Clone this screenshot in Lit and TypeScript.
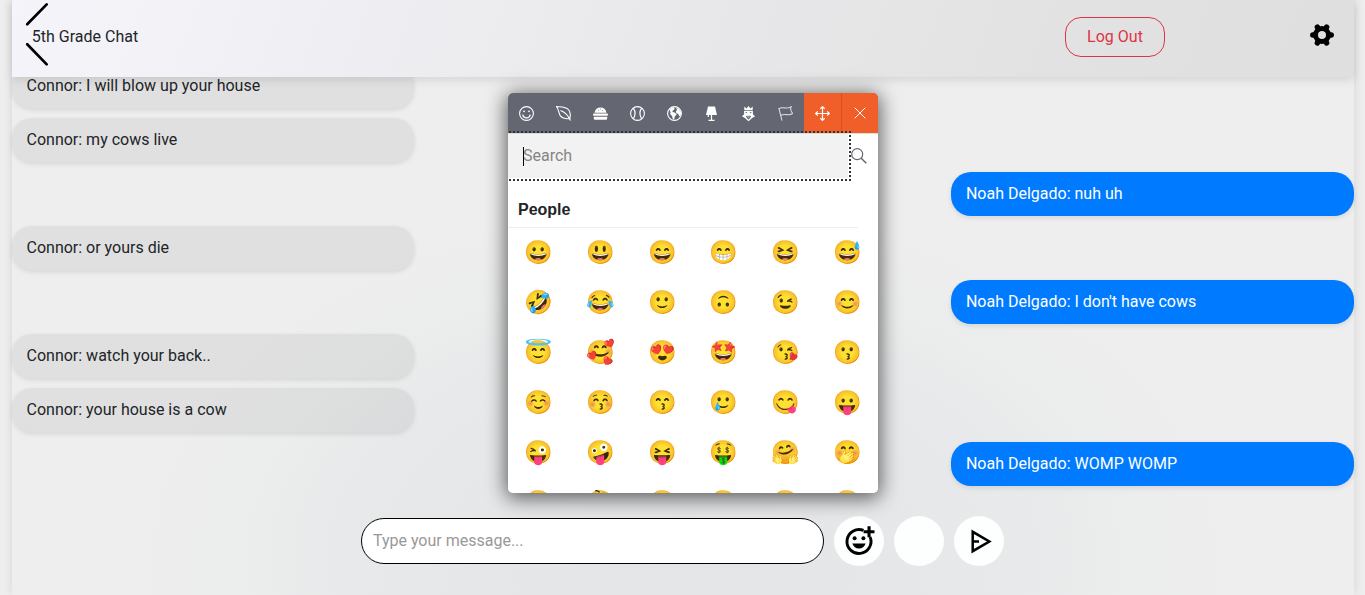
import { LitElement, html, css, svg } from "lit";
import { customElement } from "lit/decorators.js";

interface Message { own: boolean; text: string; }

const MESSAGES: Message[] = [
  { own: false, text: "Connor: I will blow up your house" },
  { own: false, text: "Connor: my cows live" },
  { own: true, text: "Noah Delgado: nuh uh" },
  { own: false, text: "Connor: or yours die" },
  { own: true, text: "Noah Delgado: I don't have cows" },
  { own: false, text: "Connor: watch your back.." },
  { own: false, text: "Connor: your house is a cow" },
  { own: true, text: "Noah Delgado: WOMP WOMP" },
];

const EMOJI = [
  "😀", "😃", "😄", "😁", "😆", "😅",
  "🤣", "😂", "🙂", "🙃", "😉", "😊",
  "😇", "🥰", "😍", "🤩", "😘", "😗",
  "☺️", "😚", "😙", "🥲", "😋", "😛",
  "😜", "🤪", "😝", "🤑", "🤗", "🤭",
  "🤫", "🤔", "🤐", "🤨", "😐", "😑",
];

const TABS = [
  svg`<circle cx="7.5" cy="7.5" r="6.9"/><path d="M3.7 8.6c.5 2.2 2 3.300 3.800 3.300s3.300-1.100 3.800-3.300" stroke-width="1.300"/><circle cx="5" cy="5.300" r=".9" fill="#fff" stroke="none"/><circle cx="10" cy="5.300" r=".9" fill="#fff" stroke="none"/>`,
  svg`<path d="M.5.6C5 .9 10 .3 12.800 4c2 2.800 1.700 6 1 8.600-3.500.4-7 .2-9.200-2.400C2.400 7.400 3.200 3.500.5.600zM4.500 4.500c3.500 1.300 7.500 4.500 10 10"/>`,
  svg`<g fill="#fff" stroke="none"><path d="M1.500 6.800C2 3.300 4.500 1.500 7.500 1.500s5.500 1.800 6 5.300z"/><rect x="0" y="7.600" width="15" height="2.200" rx="1"/><path d="M.8 10.700h13.400v1.500c0 1-.7 1.600-1.700 1.600h-10c-1 0-1.700-.6-1.700-1.600z"/></g><path d="M5 4.300h.8M7.300 3h.8M9.300 4.600h.8" stroke="#646772" stroke-width=".8"/>`,
  svg`<circle cx="7.500" cy="7.500" r="6.900"/><path d="M3.300 2.200c2.200 3.200 2.200 7.400 0 10.600M11.700 2.200c-2.200 3.200-2.200 7.400 0 10.600" stroke-width="1.200"/>`,
  svg`<circle cx="7.500" cy="7.500" r="6.900"/><path d="M2.400 3.500 5.500 1.200l2.200.6-.6 2-1.700.9.300 1.300 2.600.7 1.300 1.800-1.900 2.200-.5 2.500-1.300.2-.8-3.300-1.900-1.800.3-2.100zM9.200 2l2.500.7 2.300 3.200-.2 3.600-1.600.8-.9-2.400-2-.7-.4-2.200 1.200-.8z" fill="#fff" stroke="none"/>`,
  svg`<path d="M4 .4h7l2 8.600H2z" fill="#fff" stroke="none"/><path d="M7.500 9v5M4.500 14.300h6M4.300 9v2" stroke-width="1.200"/>`,
  svg`<path d="M3.300.6 5.500 2.500 7.500.1l2 2.400L11.700.6v3.700H3.300z" fill="#fff" stroke="none"/><path d="M3.100 5.100h8.800v3.200l2.200 2.300-2.400.8H3.300l-2.400-.8 2.200-2.300z" fill="#fff" stroke="none"/><path d="M3.500 10.800 7.500 14.400 11.500 10.800" stroke-width="1.300"/><path d="M4.600 6.600h1.500M8.900 6.600h1.500M5.300 10.300h4.400L7.500 12.300z" stroke="#646772" stroke-width=".9"/>`,
  svg`<path d="M.8 1.800 4 14.600M1 3C4-.4 8.200 4.200 13.200.6c-1 2.400-.3 5 1.400 6.900-4.400 3.400-7.800-1.200-12 2.200" stroke-opacity=".75"/>`,
];

const TEETH = [0, 60, 120, 180, 240, 300];

@customElement("app-root")
export class AppRoot extends LitElement {
  static styles = css`
    * { box-sizing: border-box; }
    :host {
      display: block; height: 595px; overflow: hidden; padding: 0 11.5px;
      font: 16px/24px Roboto, sans-serif; color: #212529; background: #eee;
    }
    .chat {
      position: relative; height: 595px; display: flex; flex-direction: column;
      box-shadow: 0 0 10px rgba(0,0,0,.1);
      background: radial-gradient(ellipse 540px 350px at 50% 560px, #e3e5e7 0%, #e5e7e9 35%, #e7e9ea 62%, #ebecec 80%, #eee 100%);
    }
    .top {
      flex: none; height: 77px; display: flex; align-items: center; z-index: 1;
      background: linear-gradient(110deg, #f5f4fa 0%, #efeff3 25%, #e7e7e9 55%, #e2e2e2 78%, #dfdfdf 100%);
      box-shadow: 0 2px 10px rgba(0,0,0,.13);
    }
    .title { width: 1053.5px; height: 77px; padding: 25px 0 0 20.3px; position: relative; }
    .back { position: absolute; left: 11.5px; top: 0; }
    .logout {
      width: 100px; height: 40px; margin-top: -3px; border: 1px solid #dc3545; border-radius: 16px;
      background: transparent; color: #dc3545; font: inherit; padding: 0;
    }
    .gear { margin: -7px 0 0 145px; }
    .messages { flex: none; height: 423px; margin-top: -13px; display: flex; flex-direction: column; gap: 10px; }
    .msg {
      width: 30%; height: 44px; flex: none; padding: 10px 15px; border-radius: 20px;
      background: rgba(0,0,0,.06); box-shadow: 0 2px 5px rgba(0,0,0,.1);
    }
    .own { align-self: flex-end; background: #007bff; color: #fff; }
    .compose { display: flex; align-items: center; justify-content: center; gap: 10px; height: 50px; margin: 29px 0 0 0; padding-left: .4px; }
    .field { width: 463.6px; height: 46px; border: 1px solid #000; border-radius: 23px; background: #fff; color: #999; padding: 10px 11px; }
    .round { width: 50px; height: 50px; border-radius: 50%; background: #fdfefe; display: grid; place-items: center; }
    .picker {
      position: absolute; z-index: 2; left: 496.5px; top: 93px; width: 370px; height: 400px; overflow: hidden;
      border-radius: 5px; background: #fff;
    }
    .shade { position: absolute; z-index: 1; left: 496.5px; top: 93px; width: 370px; height: 400px; border-radius: 5px; box-shadow: 0 3px 20px 2px rgba(0,0,0,.62); }
    .tabs { display: grid; grid-template-columns: repeat(10, 37px); height: 40px; background: #646772; }
    .tab { display: grid; place-items: center; }
    .tab svg { display: block; }
    .hot { background: #f05f2a; }
    .last { border-left: 1px solid #d9501f; padding-right: 1px; }
    .searchrow { height: 45px; display: flex; align-items: center; border-top: 1px solid #ddd; }
    .search {
      width: 340px; height: 44px; background: #f2f2f2; outline: 2px dotted #333; outline-offset: 1px;
      color: #858585; padding: 10px 15px; position: relative;
    }
    .caret { position: absolute; left: 15px; top: 13px; width: 1px; height: 19px; background: #000; }
    .lens { margin-left: 2.6px; }
    .heading { font: bold 16px/24px "Liberation Sans", Arial, sans-serif; width: 350px; height: 50px; padding: 20px 10px 0; border-bottom: 1px solid #eee; }
    .grid { display: grid; grid-template-columns: repeat(6, 61.8px); grid-auto-rows: 50px; padding-left: .8px; }
    .emoji { width: 60px; text-align: center; font: 23px/50px "Noto Color Emoji", "Noto Sans", sans-serif; height: 50px; }
  `;

  render() {
    return html`
      <div class="chat">
        <header class="top">
          <div class="title">
            <svg class="back" width="28" height="70" fill="none" stroke="#000" stroke-width="2.700" stroke-linecap="round"><path d="M4.200 24.300 23.700 4.400M4.200 44.300 23.700 64.400"/></svg>
            5th Grade Chat
          </div>
          <button class="logout">Log Out</button>
          <svg class="gear" width="24" height="24" viewBox="0 0 24 24" fill="none" stroke="#000">
            <circle cx="12" cy="12" r="6.500" stroke-width="5"/>
            ${TEETH.map((a) => svg`<path d="M19.200 12h2" stroke-width="5.500" stroke-linecap="round" transform="rotate(${a} 12 12)"/>`)}
          </svg>
        </header>
        <main class="messages">
          ${MESSAGES.map((m) => html`<div class="msg ${m.own ? "own" : ""}">${m.text}</div>`)}
        </main>
        <footer class="compose">
          <div class="field">Type your message...</div>
          <div class="round">
            <svg width="32" height="32" viewBox="0 0 32 32"><path d="M20.500 5.400A12 12 0 1 0 27.100 12" fill="none" stroke="#000" stroke-width="2.900"/><path d="M24.500 1.300h3.100v3.900h3.900v3.100h-3.900v3.900h-3.100V8.300h-3.900V5.200h3.900zM9.300 18.500h13.400c-1.100 3-3.600 5-6.700 5s-5.600-2-6.700-5z"/><circle cx="11.600" cy="13.200" r="2"/><circle cx="20.400" cy="13.200" r="2"/></svg>
          </div>
          <div class="round"></div>
          <div class="round">
            <svg width="32" height="32" viewBox="0 0 32 32"><path d="M9.700 6.800v19.400L26.300 16.500zM10 16.500h6" fill="none" stroke="#000" stroke-width="2.500"/></svg>
          </div>
        </footer>
        <div class="shade"></div>
        <section class="picker">
          <nav class="tabs">
            ${TABS.map((t) => html`<div class="tab"><svg width="15" height="15" viewBox="0 0 15 15" fill="none" stroke="#fff" stroke-width="1.100">${t}</svg></div>`)}
            <div class="tab hot"><svg width="15" height="15" viewBox="0 0 15 15" fill="none" stroke="#fff" stroke-width="1.200"><path d="M7.500.700v13.600M.700 7.500h13.600M5.300 2.800 7.500.700l2.200 2.100M5.300 12.200l2.200 2.100 2.200-2.100M2.800 5.300.700 7.500l2.100 2.200M12.200 5.300l2.100 2.200-2.100 2.200"/></svg></div>
            <div class="tab hot last"><svg width="12" height="12" viewBox="0 0 12 12" fill="none" stroke="#fff" stroke-width="1"><path d="M.7.7l10.600 10.600M11.300.7.700 11.300"/></svg></div>
          </nav>
          <div class="searchrow">
            <div class="search">Search<span class="caret"></span></div>
            <svg class="lens" width="16" height="16" viewBox="0 0 16 16" fill="none" stroke="#646772" stroke-width="1.200"><circle cx="6.200" cy="6.200" r="5.500"/><path d="M10.200 10.200 15.300 15.300" stroke-width="1.500"/></svg>
          </div>
          <div class="heading">People</div>
          <div class="grid">${EMOJI.map((e) => html`<span class="emoji">${e}</span>`)}</div>
        </section>
      </div>`;
  }
}
